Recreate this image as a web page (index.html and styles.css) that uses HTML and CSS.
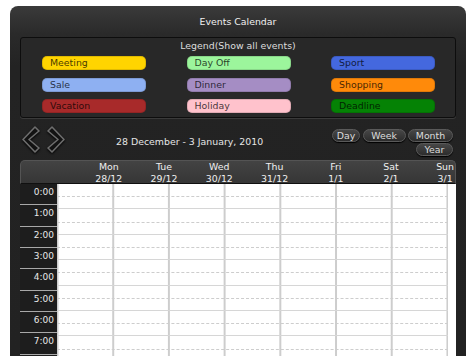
FILE: index.html
```html
<!DOCTYPE html>
<html>
<head>
<meta charset="utf-8">
<link rel="stylesheet" href="styles.css">
</head>
<body>
<div class="panel">
  <div class="title">Events Calendar</div>
  <div class="legend">
    <div class="legend-title">Legend(Show all events)</div>
    <div class="legend-grid">
      <div class="pill meeting">Meeting</div>
      <div class="pill dayoff">Day Off</div>
      <div class="pill sport">Sport</div>
      <div class="pill sale">Sale</div>
      <div class="pill dinner">Dinner</div>
      <div class="pill shopping">Shopping</div>
      <div class="pill vacation">Vacation</div>
      <div class="pill holiday">Holiday</div>
      <div class="pill deadline">Deadline</div>
    </div>
  </div>
  <div class="toolbar">
    <div class="nav">
      <svg class="arrow" width="19" height="27" viewBox="0 0 19 27"><polygon points="14,1 18,5 8,13.5 18,22 14,26 2,13.5" fill="#121212" stroke="#6e6e6e" stroke-width="1.6" stroke-linejoin="round"/></svg>
      <svg class="arrow" width="19" height="27" viewBox="0 0 19 27"><polygon points="5,1 1,5 11,13.5 1,22 5,26 17,13.5" fill="#121212" stroke="#6e6e6e" stroke-width="1.6" stroke-linejoin="round"/></svg>
    </div>
    <div class="range">28 December - 3 January, 2010</div>
    <div class="views">
      <div class="views-row">
        <div class="btn btn-day">Day</div>
        <div class="btn btn-week">Week</div>
        <div class="btn btn-month">Month</div>
      </div>
      <div class="views-row">
        <div class="btn btn-year">Year</div>
      </div>
    </div>
  </div>
  <div class="cal">
    <div class="cal-head">
      <div></div>
      <div class="dh"><span>Mon<br>28/12</span></div>
      <div class="dh"><span>Tue<br>29/12</span></div>
      <div class="dh"><span>Wed<br>30/12</span></div>
      <div class="dh"><span>Thu<br>31/12</span></div>
      <div class="dh"><span>Fri<br>1/1</span></div>
      <div class="dh"><span>Sat<br>2/1</span></div>
      <div class="dh"><span>Sun<br>3/1</span></div>
    </div>
    <div class="cal-body">
      <div class="times">
        <div class="t">0:00</div>
        <div class="t">1:00</div>
        <div class="t">2:00</div>
        <div class="t">3:00</div>
        <div class="t">4:00</div>
        <div class="t">5:00</div>
        <div class="t">6:00</div>
        <div class="t">7:00</div>
      </div>
      <div class="days">
        <div class="hour"></div>
        <div class="hour"></div>
        <div class="hour"></div>
        <div class="hour"></div>
        <div class="hour"></div>
        <div class="hour"></div>
        <div class="hour"></div>
      </div>
      <div class="gutter"></div>
    </div>
  </div>
</div>
</body>
</html>
```
FILE: styles.css
```css
html, body {
  margin: 0;
  padding: 0;
  background: #ffffff;
  overflow: hidden;
}
body {
  font-family: "DejaVu Sans", Verdana, sans-serif;
  font-size: 9.4px;
  color: #e2e2e2;
}
.panel {
  margin: 6px 0 0 10px;
  width: 456px;
  height: 350px;
  box-sizing: border-box;
  padding: 0 10px;
  border-radius: 8px 8px 0 0;
  background: linear-gradient(to bottom, #3a3a3a 0px, #2a2a2a 28px, #232323 60px, #222222 100%);
}
.title {
  height: 31px;
  line-height: 31px;
  text-align: center;
  color: #f0f0f0;
}
.legend {
  height: 81px;
  box-sizing: border-box;
  border: 1px solid #0d0d0d;
  border-radius: 3px;
  background: #282828;
  box-shadow: 0 1px 0 #3a3a3a;
  padding: 1px 0 0 21px;
}
.legend-title {
  line-height: 14px;
  text-align: center;
  padding-right: 21px;
  color: #dcdcdc;
}
.legend-grid {
  margin-top: 3px;
  display: grid;
  grid-template-columns: repeat(3, 104px);
  column-gap: 40.5px;
  row-gap: 7.5px;
}
.pill {
  height: 14px;
  line-height: 14px;
  border-radius: 5px;
  padding-left: 8px;
  color: rgba(0, 0, 0, 0.75);
  box-shadow: inset 0 0 0 1px rgba(0, 0, 0, 0.12);
}
.meeting { background: #ffd400; }
.dayoff { background: #9cf59c; }
.sport { background: #4468de; }
.sale { background: #8eb0f2; }
.dinner { background: #a58dc4; }
.shopping { background: #ff8a0a; }
.vacation { background: #a82a2a; }
.holiday { background: #ffc2cc; }
.deadline { background: #058205; }
.toolbar {
  height: 42px;
  display: flex;
  align-items: flex-start;
}
.nav {
  margin: 8px 0 0 1px;
  display: flex;
  gap: 7px;
}
.arrow {
  display: block;
  filter: drop-shadow(0 1px 1px #000);
}
.range {
  margin: 18px 0 0 50px;
  line-height: 12px;
  color: #e6e6e6;
}
.views {
  margin: 11px 3px 0 auto;
  display: flex;
  flex-direction: column;
  align-items: flex-end;
}
.views-row {
  display: flex;
  gap: 2.5px;
}
.btn {
  height: 13px;
  line-height: 11px;
  box-sizing: border-box;
  border: 1px solid #5a5a5a;
  border-radius: 7px;
  background: linear-gradient(to bottom, #474747, #2c2c2c);
  color: #dcdcdc;
  text-align: center;
  box-shadow: 0 1px 1px #000;
}
.btn-day { width: 28px; }
.btn-week { width: 43px; }
.btn-month { width: 45px; }
.btn-year { width: 37px; margin-top: 0.5px; }
.cal {
  width: 436px;
}
.cal-head {
  height: 24px;
  box-sizing: border-box;
  border: 1px solid #545454;
  border-bottom: 1px solid #101010;
  border-radius: 5px 5px 0 0;
  background: linear-gradient(to bottom, #434343, #363636);
  display: grid;
  grid-template-columns: 46px repeat(7, 1fr);
  padding-right: 1px;
}
.dh {
  text-align: right;
}
.dh span {
  display: inline-block;
  text-align: center;
  line-height: 12px;
  color: #f0f0f0;
}
.cal-body {
  display: flex;
  height: 172px;
  overflow: hidden;
}
.times {
  width: 37px;
  background: #1d1d1d;
}
.t {
  height: 21.33px;
  box-sizing: border-box;
  border-bottom: 1px solid #a8a8a8;
  padding: 2px 3px 0 0;
  line-height: 12px;
  text-align: right;
  font-size: 9px;
  color: #e8e8e8;
}
.days {
  width: 391px;
  background: #ffffff linear-gradient(to left, #cdcdcd 1.6px, transparent 1.6px) 1.5px 0 / 55.714px 100% repeat-x;
}
.hour {
  height: 25.4px;
  box-sizing: border-box;
  border-bottom: 1px solid #d6d6d6;
  position: relative;
}
.hour::before {
  content: "";
  position: absolute;
  left: 0;
  right: 0;
  top: 12.2px;
  border-top: 1px dashed #cdcdcd;
}
.gutter {
  width: 8px;
  background: #ffffff;
}
```
